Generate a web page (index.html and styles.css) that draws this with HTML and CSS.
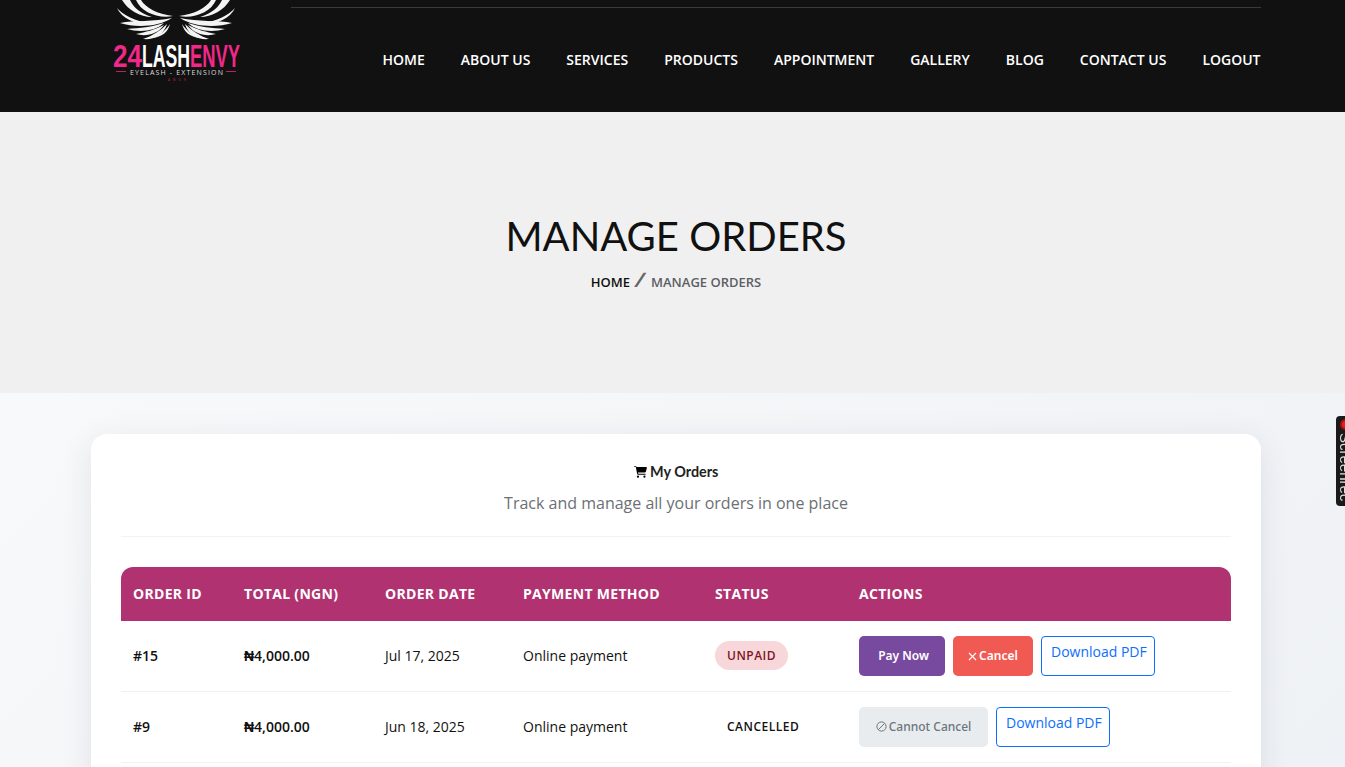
FILE: index.html
```html
<!DOCTYPE html>
<html lang="en">
<head>
    <meta charset="UTF-8">
    <meta name="viewport" content="width=device-width, initial-scale=1.0">
    <title>Manage Orders</title>
    <link rel="stylesheet" href="styles.css">
</head>
<body>
    <!-- Header -->
    <header class="site-header">
        <a class="logo" href="#">
            <svg width="130" height="84" viewBox="0 0 130 84">
                <g id="wing" fill="#f4f4f4">
                    <path d="M10 0 L18 0 C21 7 28 13 40 17 C28 17 16 10 10 0Z"/>
                    <path d="M24 0 L29 0 C34 8 45 14 61 16 C46 19 29 12 24 0Z"/>
                    <path d="M5 8 C11 15 22 21 41 24 C26 26 10 19 5 8Z"/>
                    <path d="M8 23 C22 20 42 22 60 18 C46 27 24 28 8 23Z"/>
                    <path d="M15 29 C28 28 40 27 52 23 C44 31 28 33 15 29Z"/>
                    <path d="M24 34 C34 32 42 30 52 25 C46 34 34 37 24 34Z"/>
                    <path d="M31 39 C40 36 48 31 55 24 C52 35 42 40 31 39Z"/>
                    <path d="M40 38 C48 35 54 30 58 24 C56 32 50 37 40 38Z"/>
                </g>
                <use href="#wing" transform="translate(128 0) scale(-1 1)"/>
                <text class="logo-name logo-pink" x="1" y="67" textLength="29" lengthAdjust="spacingAndGlyphs">24</text>
                <text class="logo-name logo-white" x="30" y="67" textLength="48" lengthAdjust="spacingAndGlyphs">LASH</text>
                <text class="logo-name logo-pink" x="78" y="67" textLength="50" lengthAdjust="spacingAndGlyphs">ENVY</text>
                <rect x="4" y="71" width="10" height="1" fill="#b3265f"/>
                <rect x="114" y="71" width="10" height="1" fill="#b3265f"/>
                <text class="logo-tag" x="18" y="74.5" textLength="93">EYELASH - EXTENSION</text>
                <text class="logo-small" x="56" y="81" textLength="18">ANUH</text>
            </svg>
        </a>
        <nav class="main-nav">
            <a href="#">Home</a>
            <a href="#">About Us</a>
            <a href="#">Services</a>
            <a href="#">Products</a>
            <a href="#">Appointment</a>
            <a href="#">Gallery</a>
            <a href="#">Blog</a>
            <a href="#">Contact Us</a>
            <a href="#">Logout</a>
        </nav>
    </header>

    <!-- Page title -->
    <section class="page-title">
        <h1>MANAGE ORDERS</h1>
        <div class="breadcrumb">
            <a href="#">HOME</a>
            <span class="crumb-sep">/</span>
            <span class="crumb-current">MANAGE ORDERS</span>
        </div>
    </section>

    <!-- Orders -->
    <main class="orders-area">
        <div class="orders-card">
            <div class="orders-head">
                <h2>
                    <svg class="cart-icon" width="13" height="12" viewBox="0 0 576 512"><path d="M0 24C0 11 11 0 24 0h45c22 0 42 13 51 32h411c26 0 45 25 38 50l-41 152c-8 28-33 47-62 47H177l5 29c2 11 12 19 24 19h290c13 0 24 11 24 24s-11 24-24 24H206c-35 0-65-25-71-59L83 44c-1-4-4-6-8-6H24C11 38 0 37 0 24zM128 464a48 48 0 1 1 96 0 48 48 0 1 1-96 0zm336-48a48 48 0 1 1 0 96 48 48 0 1 1 0-96z"/></svg>
                    My Orders
                </h2>
                <p>Track and manage all your orders in one place</p>
            </div>

            <table class="orders-table">
                <thead>
                    <tr>
                        <th class="col-id">Order ID</th>
                        <th class="col-total">Total (NGN)</th>
                        <th class="col-date">Order Date</th>
                        <th class="col-method">Payment Method</th>
                        <th class="col-status">Status</th>
                        <th>Actions</th>
                    </tr>
                </thead>
                <tbody>
                    <tr>
                        <td class="strong">#15</td>
                        <td class="strong">₦4,000.00</td>
                        <td>Jul 17, 2025</td>
                        <td>Online payment</td>
                        <td><span class="status status-unpaid">UNPAID</span></td>
                        <td>
                            <div class="actions">
                                <a class="btn btn-pay" href="#">Pay Now</a>
                                <a class="btn btn-cancel" href="#">
                                    <svg class="btn-icon" width="9" height="9" viewBox="0 0 9 9"><path d="M1 1 L8 8 M8 1 L1 8" stroke="#fff" stroke-width="1.1" fill="none"/></svg>Cancel
                                </a>
                                <a class="btn-pdf" href="#">Download PDF</a>
                            </div>
                        </td>
                    </tr>
                    <tr>
                        <td class="strong">#9</td>
                        <td class="strong">₦4,000.00</td>
                        <td>Jun 18, 2025</td>
                        <td>Online payment</td>
                        <td><span class="status">CANCELLED</span></td>
                        <td>
                            <div class="actions">
                                <span class="btn btn-disabled">
                                    <svg class="btn-icon" width="11" height="11" viewBox="0 0 11 11"><circle cx="5.5" cy="5.5" r="4.6" stroke="#6c757d" fill="none"/><path d="M2.4 8.6 L8.6 2.4" stroke="#6c757d"/></svg>Cannot Cancel
                                </span>
                                <a class="btn-pdf" href="#">Download PDF</a>
                            </div>
                        </td>
                    </tr>
                </tbody>
            </table>
        </div>
    </main>

    <!-- Side tab -->
    <div class="side-tab">
        <span class="rec-dot"></span>
        <span class="side-label">Screenrec</span>
    </div>
</body>
</html>
```

FILE: styles.css
```css
* {
    box-sizing: border-box;
}

html,
body {
    margin: 0;
    padding: 0;
    height: 100vh;
    overflow: hidden;
}

body {
    font-family: "Open Sans", sans-serif;
    color: #111;
    background-color: #f8f9fa;
}

a {
    text-decoration: none;
}

/* Header */
.site-header {
    display: flex;
    height: 112px;
    padding: 0 84px 0 112px;
    background-color: #111;
}

.logo {
    display: block;
    width: 130px;
    height: 84px;
    margin-right: 49px;
}

.logo-name {
    font-family: "Liberation Sans", sans-serif;
    font-size: 32px;
    font-weight: 700;
}

.logo-pink {
    fill: #f0288a;
}

.logo-white {
    fill: #fff;
}

.logo-tag {
    font-family: "Open Sans", sans-serif;
    font-size: 7px;
    fill: #ddd;
}

.logo-small {
    font-family: "Open Sans", sans-serif;
    font-size: 3px;
    fill: #d8245f;
}

.main-nav {
    flex: 1;
    display: flex;
    justify-content: flex-end;
    gap: 36px;
    margin-top: 7px;
    padding: 42px 0.5px 0 0;
    border-top: 1px solid #3a3a3a;
}

.main-nav a {
    color: #fff;
    font-size: 14px;
    font-weight: 600;
    line-height: 20px;
    text-transform: uppercase;
}

/* Page title */
.page-title {
    height: 281px;
    padding: 99px 0 0 7px;
    text-align: center;
    background-color: #f0f0f0;
}

.page-title h1 {
    margin: 0;
    font-family: Lato, sans-serif;
    font-size: 40px;
    font-weight: 400;
    line-height: 50px;
    color: #111;
}

.breadcrumb {
    margin-top: 10px;
    font-size: 13px;
    font-weight: 600;
    line-height: 18px;
}

.breadcrumb a {
    color: #111;
}

.crumb-sep {
    display: inline-block;
    margin: 0 3px;
    font-size: 20px;
    line-height: 18px;
    font-weight: 700;
    color: #666;
    transform: skewX(-16deg);
}

.crumb-current {
    color: #5c5f66;
}

/* Orders */
.orders-area {
    min-height: 500px;
    padding: 41px 84px 40px 91px;
    background: linear-gradient(135deg, #f8f9fa 0%, #eef1f5 100%);
}

.orders-card {
    padding: 30px;
    background-color: #fff;
    border-radius: 16px;
    box-shadow: 0 8px 32px rgba(40, 50, 80, 0.1);
}

.orders-head {
    height: 73px;
    margin-bottom: 30px;
    text-align: center;
    border-bottom: 1px solid #f3f3f3;
}

.orders-head h2 {
    margin: 0;
    font-family: Lato, sans-serif;
    font-size: 14.4px;
    font-weight: 700;
    line-height: 15px;
    color: #222;
}

.cart-icon {
    vertical-align: -1px;
}

.orders-head p {
    margin: 13px 0 0;
    font-size: 16px;
    line-height: 22px;
    color: #6c6f75;
}

.orders-table {
    width: 100%;
    border-collapse: separate;
    border-spacing: 0;
    table-layout: fixed;
    font-size: 14px;
}

.orders-table th {
    height: 54px;
    padding: 0 12px 2px;
    text-align: left;
    font-size: 14px;
    font-weight: 700;
    letter-spacing: 0.3px;
    text-transform: uppercase;
    color: #fff;
    background-color: #b03270;
}

.orders-table th:first-child {
    border-top-left-radius: 12px;
}

.orders-table th:last-child {
    border-top-right-radius: 12px;
}

.col-id { width: 111px; }
.col-total { width: 141px; }
.col-date { width: 138px; }
.col-method { width: 192px; }
.col-status { width: 144px; }

.orders-table td {
    height: 71px;
    padding: 0 12px 2px;
    color: #111;
    border-bottom: 1px solid #f0f1f3;
}

.orders-table td:last-child {
    padding-bottom: 0;
}

.orders-table td.strong {
    font-weight: 600;
}

.status {
    display: inline-block;
    padding: 6px 12px;
    font-size: 12px;
    font-weight: 600;
    line-height: 17px;
    letter-spacing: 0.5px;
    border-radius: 15px;
    vertical-align: 1px;
}

.status-unpaid {
    color: #7c1526;
    background-color: #f8d7da;
}

.actions {
    display: flex;
    gap: 8px;
}

.btn {
    display: block;
    height: 40px;
    padding: 0 14px;
    font-family: "Noto Sans", sans-serif;
    font-size: 12px;
    font-weight: 600;
    line-height: 40px;
    color: #fff;
    border-radius: 5px;
}

.btn-icon {
    margin-right: 2px;
    vertical-align: -1px;
}

.btn-pay {
    width: 86px;
    padding: 0 0 0 3px;
    text-align: center;
    background-color: #784a9f;
}

.btn-cancel {
    width: 80px;
    padding: 0;
    text-align: center;
    background-color: #f15a52;
}

.btn-disabled {
    width: 129px;
    padding: 0;
    text-align: center;
    font-weight: 500;
    color: #6c757d;
    background-color: #e9ecef;
}

.btn-pdf {
    display: block;
    height: 40px;
    padding: 5px 7px 0 9px;
    font-size: 14px;
    line-height: 20px;
    color: #0d6efd;
    border: 1px solid #0d6efd;
    border-radius: 4px;
}

/* Side tab */
.side-tab {
    position: fixed;
    top: 416px;
    right: 0;
    width: 9px;
    height: 90px;
    overflow: hidden;
    background-color: #1a1a1a;
    border-radius: 4px 0 0 4px;
}

.rec-dot {
    position: absolute;
    top: 3px;
    left: 4px;
    width: 11px;
    height: 11px;
    background-color: #f01c1c;
    border: 2px solid #a01010;
    border-radius: 50%;
}

.side-label {
    position: absolute;
    top: 17px;
    left: 2px;
    font-family: "Liberation Sans", sans-serif;
    font-size: 15px;
    line-height: 15px;
    color: #ddd;
    writing-mode: vertical-rl;
    white-space: nowrap;
}
```
